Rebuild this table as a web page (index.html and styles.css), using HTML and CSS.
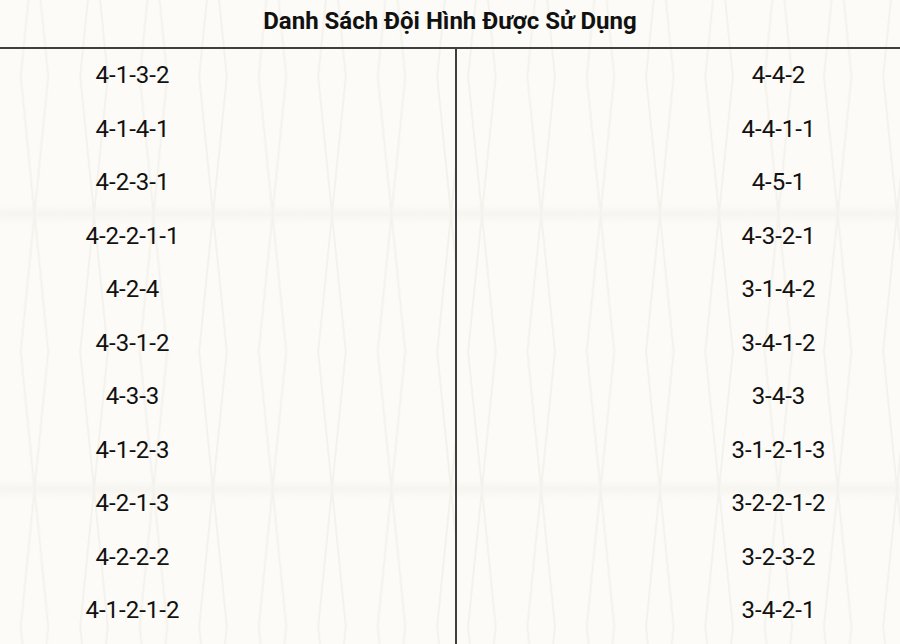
FILE: index.html
```html
<!DOCTYPE html>
<html lang="vi">
<head>
<meta charset="utf-8">
<title>Danh Sách Đội Hình Được Sử Dụng</title>
<link rel="stylesheet" href="styles.css">
</head>
<body>
<div class="page">
  <svg class="bg" width="900" height="644" aria-hidden="true">
    <defs>
      <linearGradient id="band" x1="0" y1="0" x2="0" y2="1">
        <stop offset="0" stop-color="#f7f6f1" stop-opacity="0"/>
        <stop offset="0.5" stop-color="#f6f5f0" stop-opacity="1"/>
        <stop offset="1" stop-color="#f7f6f1" stop-opacity="0"/>
      </linearGradient>
      <pattern id="zigL" width="59.5" height="275" patternUnits="userSpaceOnUse" x="-25" y="-61">
        <rect x="0" y="-10" width="59.5" height="20" fill="url(#band)"/>
        <rect x="0" y="265" width="59.5" height="20" fill="url(#band)"/>
        <polyline points="0,0 13.75,137.5 0,275" fill="none" stroke="#f4f2ed" stroke-width="2"/>
        <polyline points="59.5,0 45.75,137.5 59.5,275" fill="none" stroke="#f4f2ed" stroke-width="2"/>
      </pattern>
      <pattern id="zigR" width="59.3" height="275" patternUnits="userSpaceOnUse" x="7.5" y="-61">
        <rect x="0" y="-10" width="59.3" height="20" fill="url(#band)"/>
        <rect x="0" y="265" width="59.3" height="20" fill="url(#band)"/>
        <polyline points="0,0 13.75,137.5 0,275" fill="none" stroke="#f4f2ed" stroke-width="2"/>
        <polyline points="59.3,0 45.55,137.5 59.3,275" fill="none" stroke="#f4f2ed" stroke-width="2"/>
      </pattern>
    </defs>
    <rect x="0" y="0" width="456" height="644" fill="url(#zigL)"/>
    <rect x="456" y="0" width="444" height="644" fill="url(#zigR)"/>
  </svg>

  <h1 class="title">Danh Sách Đội Hình Được Sử Dụng</h1>

  <div class="lists">
    <ul class="col col-left">
      <li>4-1-3-2</li>
      <li>4-1-4-1</li>
      <li>4-2-3-1</li>
      <li>4-2-2-1-1</li>
      <li>4-2-4</li>
      <li>4-3-1-2</li>
      <li>4-3-3</li>
      <li>4-1-2-3</li>
      <li>4-2-1-3</li>
      <li>4-2-2-2</li>
      <li>4-1-2-1-2</li>
    </ul>
    <ul class="col col-right">
      <li>4-4-2</li>
      <li>4-4-1-1</li>
      <li>4-5-1</li>
      <li>4-3-2-1</li>
      <li>3-1-4-2</li>
      <li>3-4-1-2</li>
      <li>3-4-3</li>
      <li>3-1-2-1-3</li>
      <li>3-2-2-1-2</li>
      <li>3-2-3-2</li>
      <li>3-4-2-1</li>
    </ul>
  </div>
</div>
</body>
</html>
```

FILE: styles.css
```css
html, body {
  margin: 0;
  padding: 0;
}

body {
  background: #fcfbf7;
  font-family: Roboto, "Noto Sans", sans-serif;
  color: #111;
  overflow: hidden;
}

.page {
  position: relative;
  width: 900px;
  height: 644px;
  display: flex;
  flex-direction: column;
}

.bg {
  position: absolute;
  left: 0;
  top: 0;
  z-index: 0;
}

.title {
  position: relative;
  z-index: 1;
  margin: 0;
  height: 43px;
  line-height: 43px;
  padding-bottom: 4px;
  border-bottom: 2px solid #3f3f3f;
  text-align: center;
  font-size: 24px;
  font-weight: 700;
  color: #111;
}

.lists {
  position: relative;
  z-index: 1;
  flex: 1;
  display: grid;
  grid-template-columns: 457px 1fr;
}

.col {
  list-style: none;
  margin: 0;
  padding: 0;
}

.col li {
  height: 53.5px;
  line-height: 53.5px;
  text-align: center;
  font-size: 24px;
}

.col-left {
  border-right: 2px solid #3f3f3f;
}

.col-left li {
  padding-right: 190px;
}

.col-right li {
  padding-left: 200px;
}
```
